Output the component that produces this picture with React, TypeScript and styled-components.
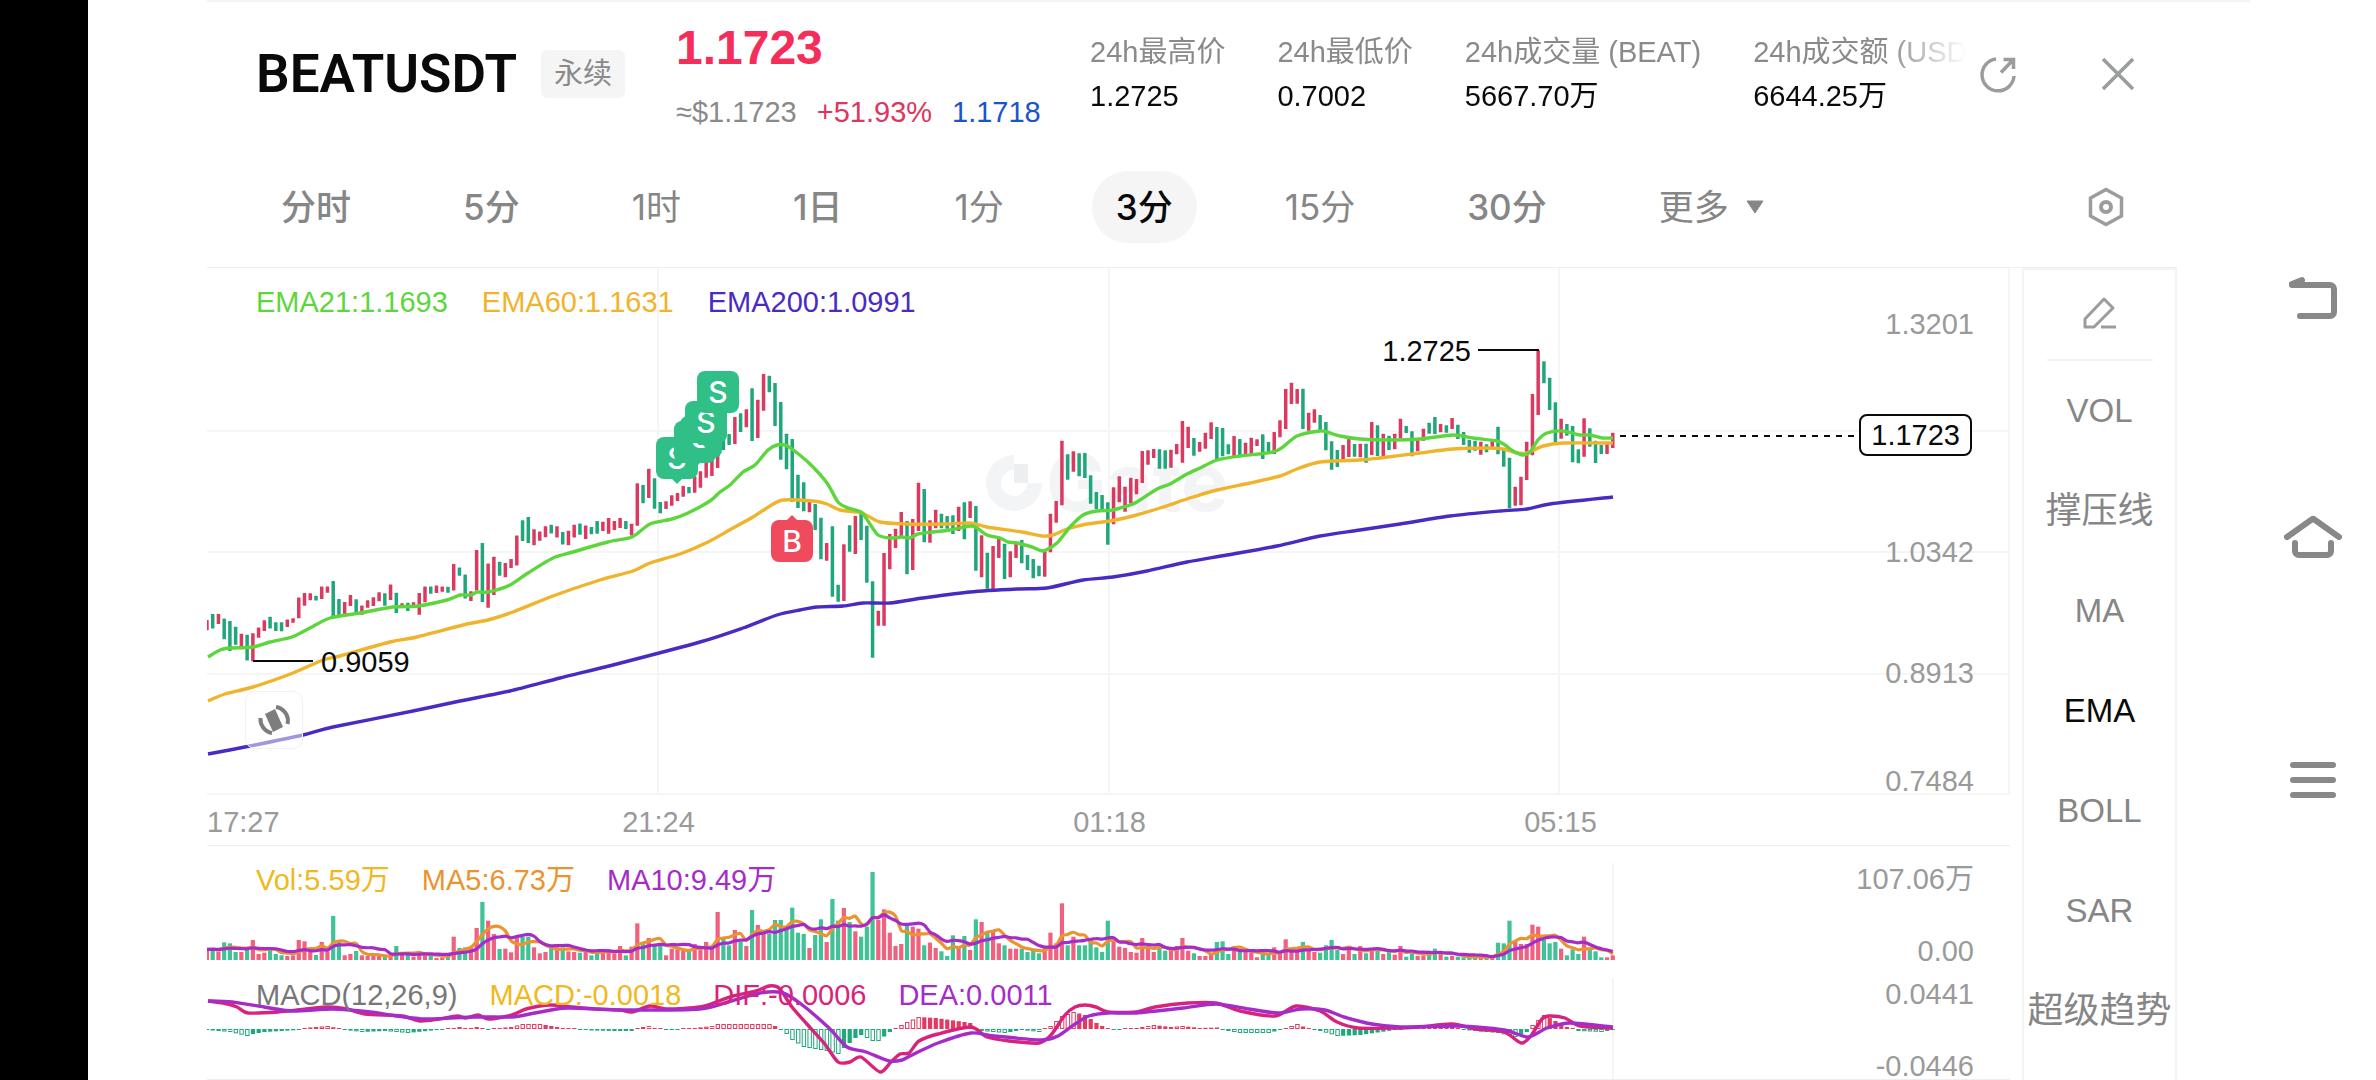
import React from "react";
import styled, { createGlobalStyle } from "styled-components";

/* ---------- chart data ---------- */

const STEP = 5.738;
const FIRST_X = 212.7;
const slotX = (i: number) => FIRST_X + STEP * i;

type Candle = { up: boolean; top: number; bottom: number };

/* Each run holds "r|g high-low" entries in the run's own unit, counted down from its origin. */
const RUNS: { origin: number; unit: number; bars: string }[] = [
  {
    origin: 260,
    unit: 2.9037,
    bars:
      "r1045-1075 g1028-1070 r1028-1057 g1041-1101 g1048-1135 g1065-1117 r1085-1130 g1088-1163 r1084-1165 r1067-1097 r1046-1077 g1036-1070 g1052-1077 g1052-1078 r1044-1066 r1040-1053 r980-1040 r967-1004 r968-988 g975-989 r948-984 r948-966 g932-1035 g984-1033 r993-1028 r973-1005 g985-1025 r1003-1030 r988-1010 r979-1005 r965-991 g968-1004 r942-987 g966-1025 r997-1007 g995-1019 r994-1007 r967-1030 r948-994 g948-969 r945-967 r948-963 g949-966 r883-960 g893-917 g913-983 r962-990 r842-960 g822-993 r881-1010 r862-973 g876-917 r880-921 r868-894 r800-887 g756-816 g746-822 r782-828 r788-815 r773-805 g769-794 r773-806 g790-826 r786-828 r769-806 g765-798 r771-810 g775-796 g758-795 r760-787 r749-795 r758-784 r749-778 g758-781 r766-800 r648-772 g653-706 r606-691 g634-722 g703-735",
  },
  {
    origin: 340,
    unit: 3,
    bars:
      "r484-507 r466-497 r459-483 r438-470 g441-460 r410-458 r394-443 r365-413 r360-408 r340-384 g300-330 g282-315 r231-312 g220-276 r208-262 g145-303 r179-294 r102-212 g107-157 g129-258 g186-359 g281-388 g297-485 g404-504 g427-514 r484-517 g492-570 g533-658 r609-662 g559-770 g734-785 r613-783 g556-635 r528-642 g516-600 g557-728 g724-953 r812-857 r639-857 r582-688 r566-624 r516-590 g543-703 r537-690 r428-573 g447-607 r541-608 r509-565 g521-565 g528-566 g526-582 r500-573 g487-598 r484-534 g498-692 r586-712 g638-746 r618-755 r590-654 g611-717 r634-712 r606-654",
  },
  {
    origin: 380,
    unit: 3,
    bars:
      "g480-550 g525-570 g537-595 g557-589 r515-590 r401-517 r363-428 r182-376 g223-299 r214-275 g220-289 g219-294 g286-371 g336-388 g345-390 g367-494 r322-433 r289-367 r320-395 r293-370 r297-343 r213-309 r211-254 r207-234 g208-266 g211-266 r209-263 r192-223 r123-248 r140-204 g174-227 r186-215 r158-206 r127-177 g141-244 g144-229 g193-223 r168-229 g177-226 r188-226 r173-222 r178-198 g163-237 g186-216 r156-222 r121-172 r27-147 r8-72 r27-71 g26-147 r98-152 r88-128 g105-153 g126-211 g184-269 g210-261 r195-238 r175-231 g192-230",
  },
  {
    origin: 320,
    unit: 3,
    bars:
      "r371-412 g371-428 r306-405 g316-408 r341-408 g347-390 r341-388 r296-355 g318-339 g334-409 r360-394 r326-362 g308-341 g291-342 r312-337 g316-338 r294-327 g314-357 g336-375 g360-398 g362-392 r365-404 g373-397 r360-385 g320-403 g385-440 g413-565 r500-557 r470-556 r365-480 r222-406 r91-285 g124-190 g173-270 g247-366 r296-356 g312-347 g318-427 g388-430 r295-410 g325-380 g362-429 g375-402 r370-402 r338-384",
  },
];

const CANDLES: Candle[] = RUNS.flatMap(({ origin, unit, bars }) =>
  bars.split(" ").map((b) => {
    const [hi, lo] = b.slice(1).split("-").map(Number);
    return { up: b[0] === "r", top: origin + hi / unit, bottom: origin + lo / unit };
  })
);

const VOLUMES = [
  30, 36, 26, 53, 50, 24, 24, 30, 60, 18, 22, 38, 18, 14, 12, 14, 60, 56, 28, 15, 54, 26, 132, 56, 14, 18, 27, 14, 12, 12,
  14, 12, 12, 42, 20, 18, 10, 25, 18, 12, 6, 8, 10, 70, 36, 38, 38, 96, 174, 118, 78, 33, 34, 23, 74, 70, 70, 38, 20, 24,
  40, 38, 38, 26, 24, 22, 30, 14, 24, 28, 32, 20, 42, 14, 40, 110, 50, 66, 44, 50, 14, 34, 32, 28, 32, 48, 30, 54, 36,
  144, 64, 44, 90, 54, 42, 150, 105, 80, 78, 120, 120, 100, 157, 82, 78, 36, 75, 122, 54, 183, 118, 156, 114, 86, 70,
  100, 264, 120, 152, 82, 42, 48, 105, 100, 94, 44, 52, 36, 26, 12, 74, 38, 72, 30, 122, 114, 82, 84, 50, 44, 34, 34, 34,
  24, 28, 20, 38, 82, 50, 170, 44, 70, 44, 44, 60, 38, 24, 118, 58, 40, 36, 24, 22, 66, 38, 24, 38, 28, 30, 42, 66, 28,
  20, 12, 12, 18, 54, 56, 18, 40, 24, 24, 22, 8, 18, 18, 38, 26, 62, 26, 26, 54, 28, 24, 22, 44, 60, 30, 18, 40, 18, 42,
  20, 36, 36, 18, 28, 16, 42, 10, 22, 12, 14, 28, 34, 20, 10, 12, 10, 8, 8, 10, 8, 10, 8, 52, 50, 118, 56, 48, 48, 106,
  100, 60, 50, 54, 34, 14, 32, 18, 70, 34, 26, 8, 8, 14,
];

type Pt = [number, number];

const EMA21: Pt[] = [
  [208, 657], [220, 650], [230, 648], [253, 647], [270, 642], [292, 637], [310, 628], [330, 618], [360, 613], [393, 607],
  [418, 606], [447, 600], [460, 595], [471, 595], [477, 592], [488, 592], [510, 585], [528, 573], [553, 558], [573, 552],
  [608, 542], [632, 537], [650, 524], [672, 519], [688, 513], [710, 501], [720, 492], [730, 485], [743, 472], [755, 465],
  [768, 450], [777, 445], [785, 445], [792, 449], [810, 464], [827, 483], [838, 502], [848, 508], [861, 512], [868, 521],
  [878, 535], [890, 538], [902, 537], [910, 538], [918, 534], [933, 532], [950, 530], [970, 526], [977, 528], [987, 535],
  [1000, 538], [1008, 542], [1017, 543], [1032, 547], [1043, 551], [1057, 543], [1070, 527], [1083, 515], [1097, 511],
  [1113, 510], [1127, 506], [1137, 502], [1157, 489], [1170, 484], [1187, 474], [1200, 468], [1217, 460], [1240, 456],
  [1273, 452], [1283, 447], [1297, 436], [1320, 431], [1327, 432], [1340, 436], [1360, 439], [1388, 440], [1420, 439],
  [1453, 435], [1473, 438], [1497, 441], [1505, 445], [1513, 451], [1523, 455], [1530, 452], [1538, 440], [1547, 433],
  [1563, 431], [1580, 435], [1590, 435], [1602, 438], [1613, 438],
];
const EMA60: Pt[] = [
  [208, 701], [225, 694], [253, 687], [293, 673], [323, 660], [340, 656], [390, 642], [417, 637], [467, 624], [488, 620],
  [513, 612], [553, 596], [600, 580], [633, 571], [650, 563], [680, 554], [708, 542], [733, 528], [753, 517], [770, 506],
  [783, 500], [813, 501], [827, 504], [840, 510], [862, 513], [880, 522], [907, 524], [947, 524], [970, 523], [987, 527],
  [1022, 532], [1042, 536], [1053, 535], [1067, 529], [1087, 524], [1110, 521], [1133, 516], [1160, 508], [1193, 497],
  [1217, 490], [1250, 483], [1280, 476], [1297, 469], [1320, 462], [1360, 460], [1380, 458], [1420, 453], [1453, 449],
  [1487, 448], [1503, 449], [1517, 453], [1527, 453], [1543, 446], [1563, 443], [1613, 443],
];
const EMA200: Pt[] = [
  [208, 754], [250, 746], [303, 735], [333, 727], [413, 711], [460, 701], [510, 691], [560, 678], [613, 665], [700, 642],
  [743, 628], [777, 615], [800, 610], [817, 607], [843, 606], [863, 603], [890, 603], [923, 598], [970, 592], [1017, 589],
  [1047, 588], [1083, 580], [1113, 577], [1147, 571], [1187, 562], [1227, 555], [1277, 546], [1320, 536], [1360, 530],
  [1400, 524], [1450, 516], [1500, 511], [1527, 509], [1550, 504], [1613, 497],
];
const DIF: Pt[] = [
  [208, 1001], [223, 1003], [237, 1007], [248, 1013], [278, 1012], [306, 1009], [328, 1007], [347, 1009], [365, 1014],
  [402, 1016], [420, 1021], [439, 1019], [457, 1016], [466, 1018], [478, 1015], [489, 1019], [512, 1015], [526, 1009],
  [549, 1005], [572, 1007], [595, 1009], [620, 1010], [632, 1012], [650, 1006], [668, 1009], [700, 1007], [719, 1001],
  [733, 996], [756, 991], [769, 986], [779, 988], [792, 1007], [806, 1023], [824, 1043], [838, 1062], [850, 1062],
  [861, 1057], [880, 1072], [891, 1062], [900, 1054], [909, 1053], [919, 1041], [938, 1034], [971, 1027], [987, 1037],
  [1009, 1041], [1039, 1043], [1051, 1035], [1065, 1015], [1075, 1007], [1085, 1005], [1096, 1007], [1108, 1012],
  [1136, 1012], [1155, 1007], [1188, 1003], [1216, 1003], [1240, 1011], [1275, 1016], [1296, 1006], [1320, 1011],
  [1337, 1022], [1358, 1028], [1396, 1028], [1419, 1027], [1452, 1024], [1476, 1029], [1504, 1032], [1521, 1043],
  [1530, 1037], [1542, 1019], [1549, 1016], [1565, 1018], [1580, 1026], [1613, 1028],
];
const DEA: Pt[] = [
  [208, 1001], [232, 1002], [264, 1007], [292, 1011], [333, 1009], [370, 1012], [397, 1016], [425, 1019], [475, 1017],
  [512, 1017], [535, 1013], [567, 1008], [622, 1010], [700, 1009], [728, 1002], [760, 993], [783, 993], [801, 1004],
  [829, 1028], [847, 1047], [866, 1052], [889, 1061], [902, 1060], [914, 1054], [938, 1043], [971, 1033], [994, 1036],
  [1042, 1040], [1058, 1036], [1075, 1024], [1089, 1016], [1108, 1013], [1136, 1013], [1183, 1008], [1216, 1004],
  [1249, 1009], [1278, 1013], [1301, 1009], [1325, 1010], [1344, 1017], [1372, 1024], [1400, 1027], [1457, 1026],
  [1504, 1030], [1528, 1037], [1547, 1028], [1570, 1023], [1613, 1027],
];
const HIST_KEYS: Pt[] = [
  [-1, -1], [1, -2], [3, -3], [6, -7], [7, -5], [9, -3], [15, -1], [16, 1], [20, 3], [22, 0.5], [23, -1], [26, -3],
  [30, -2], [34, -4], [39, -1], [41, 0], [43, 2], [44, 0], [46, 2], [48, -1], [50, 1], [52, 2], [54, 5], [57, 5], [61, 1],
  [64, -0.5], [66, -1.5], [70, -2], [73, -2], [75, 2], [76, 3], [77, 1], [80, -1], [84, 1], [87, 3], [88, 5], [97, 5],
  [98, 3], [99, -1], [100, -5], [101, -11], [103, -18], [107, -22], [109, -25], [110, -19], [112, -9], [113, -6],
  [115, -12], [116, -12], [118, -3], [119, 1], [121, 7], [123, 12], [126, 11], [131, 7], [132, 6], [133, 1], [134, -2],
  [138, -4], [141, -1], [144, -3], [145, 0], [146, 3], [148, 13], [150, 17], [152, 14], [154, 6], [156, 0], [158, -1],
  [159, 0], [161, 1], [164, 4], [167, 2], [169, 3], [172, 1], [175, 1.5], [176, -1], [179, -4], [184, -4], [186, -1],
  [187, 1], [189, 5], [191, 0], [193, -2], [196, -7], [200, -6], [206, -1], [210, 1], [216, 2], [218, -1], [224, -4],
  [227, -8], [229, -3], [230, 4], [232, 14], [234, 8], [236, 2], [237, 0], [238, -2], [242, -3], [244, -1],
];

const toPath = (pts: Pt[]) => {
  let d = `M${pts[0][0]} ${pts[0][1]}`;
  for (let i = 0; i < pts.length - 1; i++) {
    const a = pts[Math.max(i - 1, 0)];
    const b = pts[i];
    const c = pts[i + 1];
    const e = pts[Math.min(i + 2, pts.length - 1)];
    const k = 0.13;
    d += `C${(b[0] + (c[0] - a[0]) * k).toFixed(1)} ${(b[1] + (c[1] - a[1]) * k).toFixed(1)} ${(
      c[0] -
      (e[0] - b[0]) * k
    ).toFixed(1)} ${(c[1] - (e[1] - b[1]) * k).toFixed(1)} ${c[0]} ${c[1]}`;
  }
  return d;
};

const VOL_BASE = 960;
const average = (n: number): Pt[] =>
  VOLUMES.map((_, k) => {
    let sum = 0;
    for (let j = 0; j < n; j++) sum += VOLUMES[k - j] ?? 32;
    return [slotX(k - 1), VOL_BASE - sum / n / 3];
  });

const histAt = (i: number) => {
  const n = HIST_KEYS.findIndex(([k]) => k >= i);
  if (n <= 0) return HIST_KEYS[0][1];
  const [k0, v0] = HIST_KEYS[n - 1];
  const [k1, v1] = HIST_KEYS[n];
  return v0 + ((v1 - v0) * (i - k0)) / (k1 - k0);
};

/* ---------- styles ---------- */

const Global = createGlobalStyle`
  * { box-sizing: border-box; }
  body {
    margin: 0;
    background: #fff;
    color: #0a0a0a;
    font-family: "Liberation Sans", "Noto Sans CJK SC", sans-serif;
    font-size: 29px;
    line-height: 36px;
  }
  button {
    margin: 0;
    padding: 0;
    border: 0;
    background: none;
    color: inherit;
    font: inherit;
    cursor: pointer;
  }
`;

const Screen = styled.div`
  display: flex;
  min-height: 100vh;
`;
const Cutout = styled.div`
  flex: 0 0 88px;
  background: #000;
`;
const Terminal = styled.main`
  flex: 1;
  min-width: 0;
  margin-left: 119px;
  border-top: 2px solid #f4f4f4;
  display: flex;
  flex-direction: column;
`;
const SystemNav = styled.nav`
  flex: 0 0 126px;
  display: flex;
  flex-direction: column;
  align-items: center;
  justify-content: center;
  gap: 176px;
`;
const IconButton = styled.button`
  flex: none;
  width: 64px;
  height: 64px;
  display: grid;
  place-items: center;
`;

const Header = styled.header`
  display: flex;
  align-items: center;
  height: 144px;
  margin-right: 73px;
  padding: 0 27px 0 49px;
`;
const Instrument = styled.div`
  flex: none;
  min-width: 420px;
  display: flex;
  align-items: center;
  gap: 24px;
`;
const Symbol = styled.h1`
  margin: 0;
  font-family: Roboto, "Liberation Sans", sans-serif;
  font-size: 53px;
  line-height: 60px;
  font-weight: 600;
`;
const Tag = styled.span`
  padding: 6px 13px;
  border-radius: 6px;
  background: #f5f5f5;
  color: #8a8a8a;
`;
const Quote = styled.div`
  flex: none;
  min-width: 414px;
`;
const LastPrice = styled.div`
  font-size: 48px;
  line-height: 60px;
  font-weight: 700;
  color: #f52d5b;
`;
const QuoteRow = styled.div`
  display: flex;
  gap: 20px;
  padding-top: 16px;
`;
const Figure = styled.span<{ $color: string }>`
  color: ${(p) => p.$color};
`;
const Stats = styled.dl`
  flex: 1;
  min-width: 0;
  margin: 0;
  display: flex;
  gap: 52px;
  overflow: hidden;
  white-space: nowrap;
  mask-image: linear-gradient(to right, #000 calc(100% - 80px), transparent);
`;
const Stat = styled.div`
  flex: none;
  display: grid;
  gap: 8px;
`;
const StatName = styled.dt`
  color: #8a8a8a;
`;
const StatValue = styled.dd`
  margin: 0;
`;
const HeaderActions = styled.div`
  display: flex;
  gap: 56px;
  color: #9b9d9d;
`;

const Intervals = styled.div`
  display: flex;
  align-items: center;
  justify-content: space-between;
  height: 121px;
  margin-right: 73px;
  padding: 0 39px 0 50px;
  color: #9b9d9d;
`;
const IntervalList = styled.div`
  display: flex;
  gap: 64px;
`;
const Interval = styled.button<{ $active?: boolean; $strong?: boolean }>`
  display: flex;
  align-items: center;
  gap: 16px;
  height: 72px;
  padding: 0 24px;
  border-radius: 36px;
  font-family: Inter, "Noto Sans CJK SC", sans-serif;
  font-size: 35px;
  line-height: 44px;
  font-weight: ${(p) => (p.$strong ? 500 : 400)};
  color: ${(p) => (p.$active ? "#0a0a0a" : "#868686")};
  background: ${(p) => (p.$active ? "#f5f5f5" : "transparent")};
`;

const Workspace = styled.div`
  flex: 1;
  display: flex;
  margin-right: 73px;
  border-top: 1px solid #eee;
`;
const Charts = styled.section`
  flex: 1;
  min-width: 0;
`;
const Pane = styled.div<{ $h: number; $line?: boolean }>`
  display: grid;
  grid-template: ${(p) => p.$h}px / minmax(0, 1fr) auto;
  border-bottom: ${(p) => (p.$line ? "1px solid #eee" : "0")};
`;
const Plot = styled.svg`
  grid-area: 1 / 1 / 2 / 3;
  width: 100%;
  height: 100%;
  display: block;
`;
const Legend = styled.div<{ $gap: number }>`
  grid-area: 1 / 1;
  display: flex;
  align-items: flex-start;
  gap: ${(p) => p.$gap}px;
  padding: 16px 0 0 49px;
  white-space: nowrap;
`;
const PriceScale = styled.div`
  grid-area: 1 / 2;
  display: grid;
  grid-template-rows: 60px 121px 121px 122px 61px;
  align-content: end;
  justify-items: end;
  align-items: center;
  padding-right: 36px;
  color: #9a9a9a;
`;
const PriceLabel = styled.span<{ $align?: string }>`
  align-self: ${(p) => p.$align ?? "center"};
  line-height: 28px;
`;
const CurrentPrice = styled.span`
  margin: 8px 2px 0 0;
  padding: 1px 10px;
  border: 2px solid #0a0a0a;
  border-radius: 8px;
  background: #fff;
  color: #0a0a0a;
`;
const SideScale = styled.div`
  grid-area: 1 / 2;
  display: flex;
  flex-direction: column;
  align-items: flex-end;
  gap: 36px;
  padding: 15px 36px 0 0;
  color: #9a9a9a;
`;
const TimeScale = styled.div`
  display: grid;
  grid-template-columns: 226px 451px 451px 451px;
  align-items: center;
  height: 51px;
  padding-top: 4px;
  border-bottom: 1px solid #eee;
  color: #9a9a9a;
`;
const Time = styled.time<{ $first?: boolean }>`
  text-align: ${(p) => (p.$first ? "left" : "center")};
`;
const RotateButton = styled.button`
  grid-area: 1 / 1;
  align-self: end;
  width: 58px;
  height: 58px;
  margin: 0 0 46px 38px;
  display: grid;
  place-items: center;
  border: 1px solid #f2f2f2;
  border-radius: 10px;
  background: rgba(255, 255, 255, 0.5);
`;

const Indicators = styled.aside`
  flex: 0 0 155px;
  margin-left: 12px;
  border: 2px solid #f4f4f4;
  border-bottom: 0;
  display: flex;
  flex-direction: column;
  align-items: center;
`;
const EditCell = styled.div`
  width: 106px;
  height: 91px;
  padding-bottom: 4px;
  display: grid;
  place-items: center;
  border-bottom: 2px solid #f2f2f2;
  color: #9b9d9d;
`;
const Indicator = styled.button<{ $active?: boolean; $wide?: boolean }>`
  width: 100%;
  height: 100px;
  white-space: nowrap;
  font-size: ${(p) => (p.$wide ? 36 : 33)}px;
  color: ${(p) => (p.$active ? "#0a0a0a" : "#868686")};
`;

/* ---------- pieces ---------- */

const RED = "#db3a60";
const GREEN = "#1fa67a";

const Marker = ({ x, y, side }: { x: number; y: number; side: "S" | "B" }) => {
  const fill = side === "S" ? "#30bf87" : "#ef4a5e";
  const tip = side === "S" ? `M${x + 15} ${y + 41}l6 6l6 -6z` : `M${x + 15} ${y + 1}l6 -6l6 6z`;
  return (
    <g>
      <rect x={x} y={y} width="42" height="42" rx="8" fill={fill} />
      <path d={tip} fill={fill} />
      <text x={x + 21} y={y + 32} textAnchor="middle" fontFamily="Inter" fontSize="30" fontWeight="500" fill="#fff">
        {side}
      </text>
    </g>
  );
};

const PricePlot = () => (
  <Plot viewBox="207 268 1803 527" role="img" aria-label="BEATUSDT">
    <g fill="none" stroke="#f5f5f5" strokeWidth="2">
      <path d="M207 431H2010M207 552H2010M207 674H2010M207 794H2010M658 268V795M1109 268V795M1559 268V795M2009 268V795" />
    </g>
    <g fill="#f3f4f5">
      <path d="M1014 455a28 28 0 1 0 28 28h-15a13 13 0 1 1 -13 -13z" />
      <path d="M1014 464h14v19h-14z" fill="#eceeef" />
      <text x="1046" y="511" fontFamily="Inter" fontSize="80" fontWeight="700">
        Gate
      </text>
    </g>
    {CANDLES.map((c, k) => (
      <rect
        key={k}
        x={slotX(k - 1) - 1.75}
        y={c.top}
        width="3.5"
        height={c.bottom - c.top}
        rx="0.5"
        fill={c.up ? RED : GREEN}
      />
    ))}
    <g fill="none" strokeWidth="3.4" strokeLinejoin="round">
      <path d={toPath(EMA200)} stroke="#4a2bc2" />
      <path d={toPath(EMA60)} stroke="#efb42c" />
      <path d={toPath(EMA21)} stroke="#5dd63d" />
    </g>
    <path d="M253 661H313M1478 350H1539" stroke="#0a0a0a" strokeWidth="2" />
    <path d="M1620 436H1858" stroke="#0a0a0a" strokeWidth="2" strokeDasharray="6 6" />
    <g fontSize="29" fill="#0a0a0a">
      <text x="321" y="672">0.9059</text>
      <text x="1471" y="361" textAnchor="end">1.2725</text>
    </g>
    <Marker x={656} y={437} side="S" />
    <Marker x={674} y={421} side="S" />
    <Marker x={680} y={416} side="S" />
    <Marker x={685} y={401} side="S" />
    <Marker x={697} y={371} side="S" />
    <Marker x={771} y={520} side="B" />
  </Plot>
);

const VolumePlot = () => (
  <Plot viewBox="207 846 1803 115" aria-hidden="true">
    <path d="M1613 863V961" stroke="#f5f5f5" strokeWidth="2" />
    {VOLUMES.map((v, k) => (
      <rect
        key={k}
        x={slotX(k - 1) - 2.1}
        y={VOL_BASE - v / 3}
        width="4.2"
        height={v / 3}
        fill={CANDLES[k].up ? "#f0607f" : "#3fc296"}
      />
    ))}
    <g fill="none" strokeWidth="3.2" strokeLinejoin="round">
      <path d={toPath(average(5))} stroke="#ea9430" />
      <path d={toPath(average(10))} stroke="#a52cc9" />
    </g>
  </Plot>
);

const ZERO = 1029;
const MacdPlot = () => (
  <Plot viewBox="207 961 1803 118" aria-hidden="true">
    <path d="M1613 978V1079" stroke="#f5f5f5" strokeWidth="2" />
    {CANDLES.map((_, k) => {
      const v = histAt(k - 1);
      const h = Math.max(Math.abs(v), 1);
      const color = v >= 0 ? "#e23a60" : "#1fa87b";
      const hollow = h > 2 && Math.abs(v) >= Math.abs(histAt(k - 2));
      const x = slotX(k - 1) - 2;
      const y = v >= 0 ? ZERO - h : ZERO;
      return hollow ? (
        <rect key={k} x={x + 0.5} y={y + 0.5} width="3.4" height={h - 1} fill="#fff" stroke={color} />
      ) : (
        <rect key={k} x={x} y={y} width="4.2" height={h} fill={color} />
      );
    })}
    <g fill="none" strokeWidth="3.4" strokeLinejoin="round">
      <path d={toPath(DIF)} stroke="#d8237b" />
      <path d={toPath(DEA)} stroke="#a52cc9" />
    </g>
  </Plot>
);

const STATS = [
  ["24h最高价", "1.2725"],
  ["24h最低价", "0.7002"],
  ["24h成交量 (BEAT)", "5667.70万"],
  ["24h成交额 (USDT)", "6644.25万"],
];
const INTERVALS: [string, boolean][] = [
  ["分时", true],
  ["5分", true],
  ["1时", false],
  ["1日", true],
  ["1分", false],
  ["3分", true],
  ["15分", false],
  ["30分", true],
];
const INDICATORS = ["VOL", "撑压线", "MA", "EMA", "BOLL", "SAR", "超级趋势"];

export default function App() {
  return (
    <>
      <Global />
      <Screen>
        <Cutout />
        <Terminal>
          <Header>
            <Instrument>
              <Symbol>BEATUSDT</Symbol>
              <Tag>永续</Tag>
            </Instrument>
            <Quote>
              <LastPrice>1.1723</LastPrice>
              <QuoteRow>
                <Figure $color="#8a8a8a">≈$1.1723</Figure>
                <Figure $color="#e03560">+51.93%</Figure>
                <Figure $color="#1a56c8">1.1718</Figure>
              </QuoteRow>
            </Quote>
            <Stats>
              {STATS.map(([name, value]) => (
                <Stat key={name}>
                  <StatName>{name}</StatName>
                  <StatValue>{value}</StatValue>
                </Stat>
              ))}
            </Stats>
            <HeaderActions>
              <IconButton aria-label="分享">
                <svg width="40" height="40" viewBox="0 0 40 40" fill="none" stroke="currentColor" strokeWidth="3.5">
                  <path d="M18 5A16 16 0 1 0 36 22M25.500 5.500H35.500V15M35 6L23 18.500" />
                </svg>
              </IconButton>
              <IconButton aria-label="关闭">
                <svg width="34" height="34" viewBox="0 0 34 34" fill="none" stroke="currentColor" strokeWidth="3.5">
                  <path d="M2 2L32 32M32 2L2 32" />
                </svg>
              </IconButton>
            </HeaderActions>
          </Header>

          <Intervals>
            <IntervalList>
              {INTERVALS.map(([label, strong]) => (
                <Interval key={label} $strong={strong} $active={label === "3分"}>
                  {label}
                </Interval>
              ))}
              <Interval>
                更多
                <svg width="20" height="14" viewBox="0 0 20 14">
                  <path d="M2 1h16L10 13z" fill="#868686" stroke="#868686" strokeWidth="1" strokeLinejoin="round" />
                </svg>
              </Interval>
            </IntervalList>
            <IconButton aria-label="设置">
              <svg width="40" height="42" viewBox="0 0 40 42" fill="none" stroke="currentColor" strokeWidth="3.5">
                <path d="M20 3.500L35.500 12V30L20 38.500L4.500 30V12z" />
                <circle cx="20" cy="21" r="5" strokeWidth="4" />
              </svg>
            </IconButton>
          </Intervals>

          <Workspace>
            <Charts>
              <Pane $h={527}>
                <PricePlot />
                <Legend $gap={34}>
                  <Figure $color="#5dd63d">EMA21:1.1693</Figure>
                  <Figure $color="#efb42c">EMA60:1.1631</Figure>
                  <Figure $color="#4a2bc2">EMA200:1.0991</Figure>
                </Legend>
                <RotateButton aria-label="旋转屏幕">
                  <svg width="36" height="36" viewBox="-18 -18 36 36" fill="none" stroke="#7d7d7d" strokeWidth="4">
                    <path d="M-9 -6L1 -11L9 7L-1 12z" fill="#7d7d7d" stroke="none" />
                    <path d="M-13.500 -2A14 14 0 0 0 -2 13M13.500 4A14 14 0 0 0 2 -13" />
                  </svg>
                </RotateButton>
                <PriceScale>
                  <PriceLabel $align="start">1.3201</PriceLabel>
                  <CurrentPrice>1.1723</CurrentPrice>
                  <PriceLabel>1.0342</PriceLabel>
                  <PriceLabel>0.8913</PriceLabel>
                  <PriceLabel $align="end">0.7484</PriceLabel>
                </PriceScale>
              </Pane>
              <TimeScale>
                <Time $first>17:27</Time>
                <Time>21:24</Time>
                <Time>01:18</Time>
                <Time>05:15</Time>
              </TimeScale>
              <Pane $h={115}>
                <VolumePlot />
                <Legend $gap={32}>
                  <Figure $color="#f0b91e">Vol:5.59万</Figure>
                  <Figure $color="#ea9430">MA5:6.73万</Figure>
                  <Figure $color="#a52cc9">MA10:9.49万</Figure>
                </Legend>
                <SideScale>
                  <span>107.06万</span>
                  <span>0.00</span>
                </SideScale>
              </Pane>
              <Pane $h={118} $line>
                <MacdPlot />
                <Legend $gap={32}>
                  <Figure $color="#777">MACD(12,26,9)</Figure>
                  <Figure $color="#f0b91e">MACD:-0.0018</Figure>
                  <Figure $color="#d8237b">DIF:-0.0006</Figure>
                  <Figure $color="#a52cc9">DEA:0.0011</Figure>
                </Legend>
                <SideScale>
                  <span>0.0441</span>
                  <span>-0.0446</span>
                </SideScale>
              </Pane>
            </Charts>

            <Indicators>
              <EditCell>
                <IconButton aria-label="编辑">
                  <svg width="36" height="36" viewBox="0 0 36 36" fill="none" stroke="currentColor" strokeWidth="3">
                    <path d="M3 32V24L22 4L31 13L12 32zM19 32H34" strokeLinejoin="round" />
                  </svg>
                </IconButton>
              </EditCell>
              {INDICATORS.map((name) => (
                <Indicator key={name} $active={name === "EMA"} $wide={/[^A-Z]/.test(name)}>
                  {name}
                </Indicator>
              ))}
            </Indicators>
          </Workspace>
        </Terminal>

        <SystemNav>
          <IconButton aria-label="返回">
            <svg width="64" height="64" viewBox="2281 267 64 64" fill="none" stroke="#888" strokeWidth="6" strokeLinecap="round" strokeLinejoin="round">
              <path d="M2292 284H2330a4 4 0 0 1 4 4V311a4 4 0 0 1 -4 4H2300" />
              <path d="M2292 283L2302 279" />
            </svg>
          </IconButton>
          <IconButton aria-label="主页">
            <svg width="64" height="64" viewBox="2281 508 64 64" fill="none" stroke="#888" strokeWidth="6" strokeLinecap="round" strokeLinejoin="round">
              <path d="M2287 537L2311 520Q2313 518 2315 520L2339 537M2295 543V551a4 4 0 0 0 4 4H2327a4 4 0 0 0 4 -4V543" />
            </svg>
          </IconButton>
          <IconButton aria-label="菜单">
            <svg width="64" height="64" viewBox="2281 748 64 64" fill="none" stroke="#888" strokeWidth="6" strokeLinecap="round">
              <path d="M2293 765H2333M2293 780H2333M2293 795H2333" />
            </svg>
          </IconButton>
        </SystemNav>
      </Screen>
    </>
  );
}
